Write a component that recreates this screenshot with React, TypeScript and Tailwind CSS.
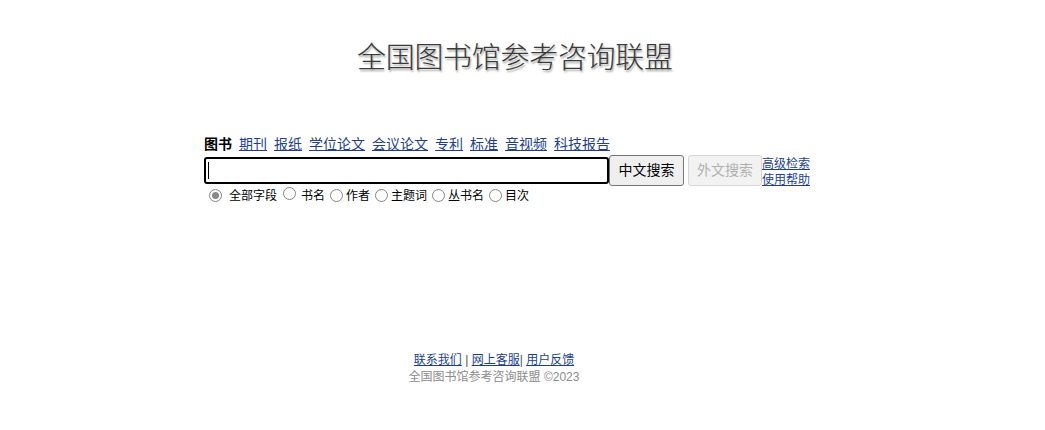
import React from "react";

const cjk = "font-['Liberation_Sans','Noto_Sans_CJK_SC',sans-serif]";

function Radio({ checked }: { checked?: boolean }) {
  return (
    <span className="inline-flex w-[13px] h-[13px] rounded-full border border-[#858585] bg-white items-center justify-center ml-[5px] mr-[3px] shrink-0">
      {checked ? <span className="w-[7px] h-[7px] rounded-full bg-[#8a8a8a]" /> : null}
    </span>
  );
}

export default function App() {
  const tabs = ["期刊", "报纸", "学位论文", "会议论文", "专利", "标准", "音视频", "科技报告"];
  const link = "text-[#1d3f8f] underline";
  return (
    <div className={`w-[1045px] h-[430px] bg-white ${cjk} text-black`}>
      <div className="pt-[40px] pl-[357px]">
        <div className="text-[29px] leading-[36px] tracking-[-0.3px] text-[#3a3a3a] font-light [text-shadow:1px_2px_2px_rgba(0,0,0,0.35)] whitespace-nowrap">
          全国图书馆参考咨询联盟
        </div>
      </div>

      <div className="pl-[204px] mt-[59px]">
        <div className="flex gap-[7px] text-[14px] leading-[18px] whitespace-nowrap">
          <span className="font-bold">图书</span>
          {tabs.map((t) => (
            <a key={t} href="#" className={link}>
              {t}
            </a>
          ))}
        </div>
        <div className="flex items-start mt-[2px]">
          <div className="mt-[2px] w-[405px] h-[27px] border-2 border-black rounded-[3px] bg-white flex items-center pl-[2px]">
            <span className="w-px h-[17px] bg-black" />
          </div>
          <button className="w-[75px] h-[31px] bg-[#efefef] border border-[#767676] rounded-[3px] text-[14px] text-black">
            中文搜索
          </button>
          <button className="ml-[4px] w-[74px] h-[31px] bg-[#f2f2f2] border border-[#d6d6d6] rounded-[3px] text-[14px] text-[#b0b0b0]">
            外文搜索
          </button>
          <div className="flex flex-col text-[12px] leading-[16px] mt-[1px]">
            <a href="#" className={link}>高级检索</a>
            <a href="#" className={link}>使用帮助</a>
          </div>
        </div>
        <div className="flex items-center text-[12px] leading-[16px] mt-[-1px] whitespace-nowrap">
          <Radio checked />
          <span className="ml-[4px]">全部字段</span>
          <span className="ml-[1px]"><Radio /></span>
          <span className="ml-[2px]">书名</span>
          <Radio />
          <span>作者</span>
          <Radio />
          <span>主题词</span>
          <Radio />
          <span>丛书名</span>
          <Radio />
          <span>目次</span>
        </div>
      </div>

      <div className="w-[988px] text-center mt-[148px] text-[12px] leading-[17px]">
        <div className="whitespace-nowrap">
          <a href="#" className={link}>联系我们</a>
          <span className="text-[#555]"> | </span>
          <a href="#" className={link}>网上客服</a>
          <span className="text-[#555]">| </span>
          <a href="#" className={link}>用户反馈</a>
        </div>
        <div className="text-[#8c8c8c]">全国图书馆参考咨询联盟 ©2023</div>
      </div>
    </div>
  );
}
